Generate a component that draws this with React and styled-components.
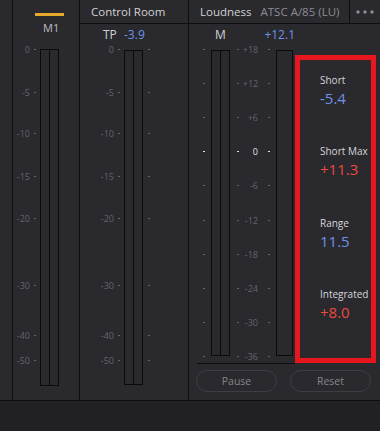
import React from 'react'
import styled, { createGlobalStyle } from 'styled-components';

const GlobalStyle = createGlobalStyle`
  body {
    margin: 0;
    background: #212125;
    font-family: "Open Sans", "Noto Sans", sans-serif;
  }
`;

const Screen = styled.div`
  width: 380px;
  height: 431px;
  display: flex;
  flex-direction: column;
  background: #212125;
  overflow: hidden;
`;

const Main = styled.div`
  height: 400px;
  display: flex;
  background: #29292e;
  border-bottom: 1px solid #0d0d0f;
`;

const Footer = styled.div`
  flex: 1;
  background: #212125;
`;

const Column = styled.div`
  width: ${p => p.$w}px;
  flex: ${p => (p.$w ? 'none' : '1')};
  display: flex;
  flex-direction: column;
  border-right: ${p => (p.$last ? 'none' : '1px solid #0d0d0f')};
`;

const StripHead = styled.div`
  height: 44px;
`;

const Indicator = styled.div`
  width: 29px;
  height: 3px;
  margin: 13px 0 0 22px;
  background: #e5aa2b;
`;

const ChannelName = styled.div`
  margin-top: 5px;
  padding-left: ${p => p.$pad}px;
  font-size: 11px;
  line-height: 14px;
  color: #bdbdc1;
`;

const Header = styled.div`
  height: 23px;
  display: flex;
  align-items: center;
  border-bottom: 1px solid #0d0d0f;
  font-size: 11.5px;
  color: #d2d2d5;
`;

const Title = styled.span`
  padding-left: 11px;
`;

const Standard = styled.span`
  margin-left: 9px;
  color: #8d8d93;
  flex: 1;
`;

const MenuButton = styled.div`
  width: 30px;
  height: 100%;
  display: flex;
  align-items: center;
  justify-content: center;
  border-left: 1px solid #0d0d0f;
`;

const ReadoutRow = styled.div`
  height: 20px;
  display: flex;
  align-items: center;
  padding-left: ${p => p.$pad}px;
  font-size: 12px;
`;

const ReadoutName = styled.span`
  color: #d2d2d5;
  width: ${p => p.$w}px;
`;

const ReadoutValue = styled.span`
  color: #6e93e6;
`;

const Scale = styled.div`
  display: flex;
  height: ${p => p.$h}px;
`;

const TickCol = styled.div`
  position: relative;
  width: ${p => p.$w}px;
  margin-left: ${p => p.$ml || 0}px;
`;

const Tick = styled.div`
  position: absolute;
  right: 0;
  left: 0;
  display: flex;
  align-items: center;
  justify-content: flex-end;
  gap: 4px;
  height: 10px;
  font-size: 9px;
  color: ${p => (p.$hot ? '#e2e2e4' : '#65656c')};
`;

const TickNum = styled.span`
  flex: ${p => (p.$fill ? '1' : 'none')};
  text-align: right;
  margin-right: ${p => (p.$fill ? 6 : 0)}px;
`;

const Dash = styled.span`
  width: 2px;
  height: 1px;
  background: currentColor;
`;

const Meter = styled.div`
  display: flex;
  width: ${p => p.$w}px;
  height: ${p => p.$h}px;
  margin-top: ${p => p.$mt}px;
  margin-left: ${p => p.$ml}px;
  border: 1px solid #0a0a0c;
  box-sizing: border-box;
  > div + div {
    border-left: 1px solid #0a0a0c;
  }
`;

const Channel = styled.div`
  flex: 1;
`;

const LoudBody = styled.div`
  display: flex;
  height: 340px;
`;

const MeterSide = styled.div`
  width: 106px;
  display: flex;
  flex-direction: column;
`;

const Rule = styled.div`
  margin-left: 8px;
  height: 1px;
  background: #0d0d0f;
`;

const StatsPanel = styled.div`
  width: 81px;
  height: 308px;
  margin-top: 31px;
  box-sizing: border-box;
  border: 5px solid #e8161f;
  padding: 13px 0 0 20px;
  display: flex;
  flex-direction: column;
`;

const Stat = styled.div`
  height: 72.4px;
`;

const StatLabel = styled.div`
  font-size: 10px;
  line-height: 14px;
  color: #d6d6d8;
  white-space: nowrap;
`;

const StatValue = styled.div`
  margin-top: 1px;
  font-size: 15px;
  line-height: 20px;
  color: ${p => (p.$red ? '#ec4a3d' : '#6e93e6')};
`;

const ButtonRow = styled.div`
  display: flex;
  gap: 13px;
  padding: 6px 0 0 7px;
`;

const PillButton = styled.button`
  width: 81px;
  height: 22px;
  border: 1px solid #3d3d43;
  border-radius: 11px;
  background: transparent;
  font-family: inherit;
  font-size: 10.5px;
  color: #85858b;
  padding: 0;
`;

const dbTicks = [
  ['0', 49], ['-5', 92], ['-10', 133], ['-15', 176],
  ['-20', 218], ['-30', 285], ['-40', 335], ['-50', 360],
];

const luTicks = ['+18', '+12', '+6', '0', '-6', '-12', '-18', '-24', '-30', '-36']
  .map((v, i) => [v, 49.5 + i * 34.1]);

const stats = [
  { label: 'Short', value: '-5.4' },
  { label: 'Short Max', value: '+11.3', red: true },
  { label: 'Range', value: '11.5' },
  { label: 'Integrated', value: '+8.0', red: true },
];

const SCALE_TOP = 44;

function Ticks({ ticks, width, ml, num = true, fill = false, left = true, right = false }) {
  return (
    <TickCol $w={width} $ml={ml}>
      {ticks.map(([v, y]) => (
        <Tick key={v} $hot={v === '0' && fill} style={{ top: y - SCALE_TOP - 5 }}>
          {left && <Dash />}
          {num && <TickNum $fill={fill}>{v}</TickNum>}
          {right && <Dash />}
        </Tick>
      ))}
    </TickCol>
  );
}

function StereoMeter(props) {
  return (
    <Meter {...props}>
      <Channel />
      <Channel />
    </Meter>
  );
}

function Dots() {
  return (
    <svg width="20" height="6" viewBox="0 0 20 6">
      {[3, 10, 17].map(cx => (
        <circle key={cx} cx={cx} cy="3" r="1.7" fill="#8d8d93" />
      ))}
    </svg>
  );
}

function App() {
  return (
    <Screen>
      <GlobalStyle />
      <Main>
        <Column $w={12} />

        <Column $w={66}>
          <StripHead>
            <Indicator />
            <ChannelName $pad={30}>M1</ChannelName>
          </StripHead>
          <Scale $h={345}>
            <Ticks ticks={dbTicks} width={23} left={false} right />
            <StereoMeter $w={19} $h={337} $mt={5} $ml={4} />
          </Scale>
        </Column>

        <Column $w={108}>
          <Header>
            <Title>Control Room</Title>
          </Header>
          <ReadoutRow $pad={23}>
            <ReadoutName $w={21}>TP</ReadoutName>
            <ReadoutValue>-3.9</ReadoutValue>
          </ReadoutRow>
          <Scale $h={345}>
            <Ticks ticks={dbTicks} width={40} left={false} right />
            <StereoMeter $w={19} $h={335} $mt={6} $ml={4} />
            <Ticks ticks={dbTicks} width={4} ml={3} num={false} />
          </Scale>
        </Column>

        <Column $last>
          <Header>
            <Title>Loudness</Title>
            <Standard>ATSC A/85 (LU)</Standard>
            <MenuButton>
              <Dots />
            </MenuButton>
          </Header>
          <LoudBody>
            <MeterSide>
              <ReadoutRow $pad={26}>
                <ReadoutName $w={53}>M</ReadoutName>
                <ReadoutValue>+12.1</ReadoutValue>
              </ReadoutRow>
              <Scale $h={319}>
                <Ticks ticks={luTicks} width={16} num={false} fill />
                <StereoMeter $w={19} $h={306} $mt={6} $ml={6} />
                <Ticks ticks={luTicks} width={33} ml={7} fill right />
                <Meter $w={17} $h={306} $mt={6} $ml={6}>
                  <Channel />
                </Meter>
              </Scale>
              <Rule />
            </MeterSide>
            <StatsPanel>
              {stats.map(s => (
                <Stat key={s.label}>
                  <StatLabel>{s.label}</StatLabel>
                  <StatValue $red={s.red}>{s.value}</StatValue>
                </Stat>
              ))}
            </StatsPanel>
          </LoudBody>
          <ButtonRow>
            <PillButton>Pause</PillButton>
            <PillButton>Reset</PillButton>
          </ButtonRow>
        </Column>
      </Main>
      <Footer />
    </Screen>
  );
}

export default App
